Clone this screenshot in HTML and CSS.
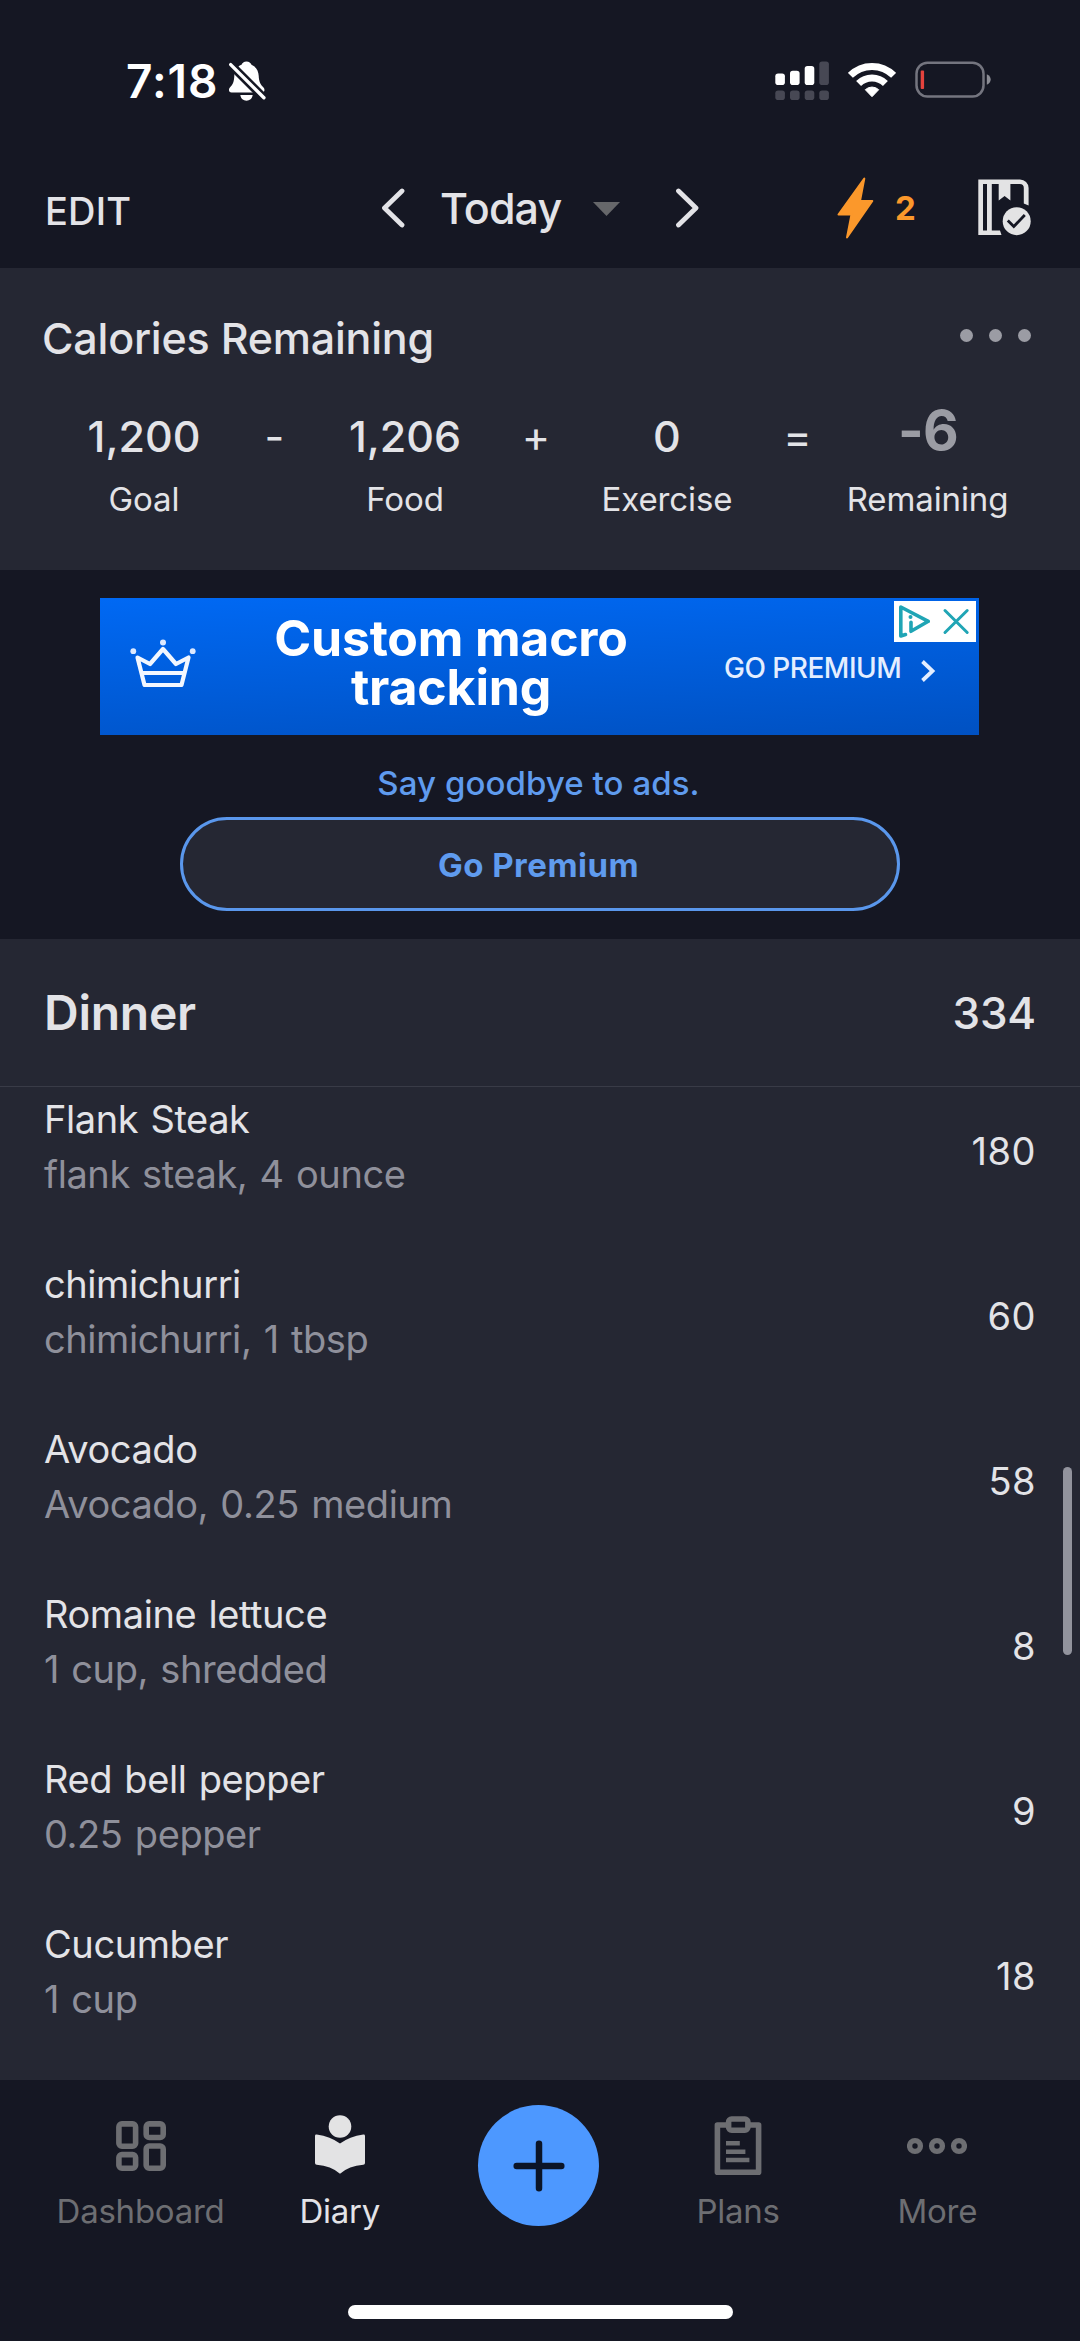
FILE: index.html
```
<!DOCTYPE html>
<html lang="en">
<head>
<meta charset="utf-8">
<title>Diary</title>
<link rel="stylesheet" href="styles.css">
</head>
<body>
<div class="screen">
  <div class="status">
    <span class="time">7:18</span>
    <svg class="bell" width="37" height="41" viewBox="229 61 37 41">
      <path fill="#fff" d="M246.500 61.500c2.600 0 4.300 1.500 5 3.300c5 2 7 6.500 7.200 11c.2 6 2 9 5 12c1.500 2 .8 4.700-1.700 4.700H231.500c-2.500 0-3.300-2.700-1.800-4.700c3-3 4.400-6 4.600-12c.2-4.500 2.200-9 7.200-11c.7-1.800 2.400-3.300 5-3.300zM240.300 95h12.400c-.6 3.600-3 5.700-6.200 5.700s-5.600-2.100-6.200-5.700z"/>
      <path stroke="#151723" stroke-width="8.500" d="M228 62l40 40"/>
      <path stroke="#fff" stroke-width="3.400" stroke-linecap="round" d="M230.700 64.600L263.900 97.800"/>
    </svg>
    <svg class="signal" width="54" height="40" viewBox="774.500 60.500 54 40">
      <g fill="#fff"><rect x="774.800" y="73" width="9.600" height="11.500" rx="2.800"/><rect x="789.500" y="70.300" width="9.600" height="14.200" rx="2.800"/><rect x="804.200" y="65.500" width="9.600" height="19" rx="2.800"/></g>
      <g fill="#474854"><rect x="818.800" y="61" width="9.600" height="23.500" rx="2.800"/><rect x="774.800" y="90" width="9.600" height="9.500" rx="2.800"/><rect x="789.500" y="90" width="9.600" height="9.500" rx="2.800"/><rect x="804.200" y="90" width="9.600" height="9.500" rx="2.800"/><rect x="818.800" y="90" width="9.600" height="9.500" rx="2.800"/></g>
    </svg>
    <svg class="wifi" width="48" height="36" viewBox="847.500 62 48 36">
      <g fill="none" stroke="#fff" stroke-width="7"><path d="M849.900 75.400a30.500 30.500 0 0 1 43.200 0"/><path d="M858.100 83.600a19 19 0 0 1 26.800 0"/></g>
      <path fill="#fff" stroke="#fff" stroke-width="1" stroke-linejoin="round" d="M871.500 96.700l-6.700-7a9.800 9.800 0 0 1 13.400 0z"/>
    </svg>
    <svg class="battery" width="76" height="38" viewBox="914.500 61.500 76 38">
      <rect x="916" y="63.200" width="67" height="33.800" rx="11" fill="none" stroke="#74757f" stroke-width="2.500"/>
      <path fill="#8b8c94" d="M986.300 74.700c5.200 1.800 5.200 8.700 0 10.500z"/>
      <rect x="920.200" y="71" width="3.400" height="18.500" rx="1" fill="#e5433d"/>
    </svg>
  </div>

  <header class="header">
    <div class="edit">EDIT</div>
    <div class="day">
      <svg width="24" height="40" viewBox="381 188 24 40"><path class="chev" d="M402 191l-17.500 17 17.500 17"/></svg>
      <span class="today">Today</span>
      <svg class="caret" width="27" height="14" viewBox="0 0 27 14"><path fill="#66676a" d="M0 0h27L13.500 14z"/></svg>
      <svg width="24" height="40" viewBox="675 188 24 40"><path class="chev" d="M678.500 191l17.500 17-17.500 17"/></svg>
    </div>
    <div class="tools">
      <svg width="38" height="64" viewBox="836 176 38 64"><path fill="#fb982b" stroke="#fb982b" stroke-width="2" stroke-linejoin="round" d="M864.300 178.500L860 201h12.300L847 237.500l4.500-23h-13z"/></svg>
      <span class="streak">2</span>
      <svg class="book" width="54" height="58" viewBox="978 178.500 54 58">
        <path fill="#e3e3e4" fill-rule="evenodd" d="M978.300 179H1020a8.600 8.600 0 0 1 8.600 8.600V205l-4.800-2V187.600a4 4 0 0 0-4-4h-9.400V200l-5.800-4.500-5.900 4.500v-16.400h-6.900V230h8.200l1.500 4.400h-23.200zM983 183.600V230h4v-46.400z"/>
        <circle cx="1016.700" cy="220.700" r="14" fill="#e3e3e4"/>
        <path fill="none" stroke="#151723" stroke-width="2.800" d="M1007.800 220l6 6 11-11.500"/>
      </svg>
    </div>
  </header>

  <section class="summary">
    <div class="summary-head">
      <h2>Calories Remaining</h2>
      <div class="dots"><i></i><i></i><i></i></div>
    </div>
    <div class="equation">
      <div class="term"><b>1,200</b><span>Goal</span></div>
      <div class="op">-</div>
      <div class="term"><b>1,206</b><span>Food</span></div>
      <div class="op">+</div>
      <div class="term"><b>0</b><span>Exercise</span></div>
      <div class="op">=</div>
      <div class="term result"><b>-6</b><span>Remaining</span></div>
    </div>
  </section>

  <section class="promo">
    <div class="banner">
      <svg width="66" height="50" viewBox="130 637.500 66 50">
        <g fill="none" stroke="#f2f7ff" stroke-width="4.200" stroke-linejoin="round"><path d="M137.500 657l12.500 6.500L163 648.500l13 15 12.500-6.500-7 27.500h-37z"/><path d="M142 672.500h42"/></g>
        <g fill="#dce9ff"><circle cx="163" cy="642" r="3"/><circle cx="133.300" cy="650.700" r="2.900"/><circle cx="192.700" cy="650.700" r="2.900"/></g>
      </svg>
      <div class="headline">Custom macro<br>tracking</div>
      <div class="cta">GO PREMIUM</div>
      <svg class="cta-arrow" width="16" height="26" viewBox="920.500 657.500 16 26"><path fill="none" stroke="#e4eeff" stroke-width="3.800" d="M923 661l10 9.500-10 9.500"/></svg>
      <div class="adchoices">
        <svg width="82" height="41" viewBox="894 601 82 41">
          <g fill="none" stroke="#20a5b5" stroke-width="3.600" stroke-linejoin="round" stroke-linecap="round"><path d="M905.500 634.500l-4.700 1.500v-29l27.500 14.300-17.300 10v-9"/><path stroke-width="3" d="M945 610.500l22.200 22M967.200 610.500l-22.200 22"/></g>
          <circle cx="910.500" cy="617" r="2" fill="#20a5b5"/>
        </svg>
      </div>
    </div>
    <div class="goodbye">Say goodbye to ads.</div>
    <div class="premium">Go Premium</div>
  </section>

  <section class="meal">
    <div class="meal-head"><h2>Dinner</h2><span>334</span></div>
    <div class="foods">
      <div class="food"><div class="info"><div>Flank Steak</div><div class="sub">flank steak, 4 ounce</div></div><span>180</span></div>
      <div class="food"><div class="info"><div>chimichurri</div><div class="sub">chimichurri, 1 tbsp</div></div><span>60</span></div>
      <div class="food"><div class="info"><div>Avocado</div><div class="sub">Avocado, 0.25 medium</div></div><span>58</span></div>
      <div class="food"><div class="info"><div>Romaine lettuce</div><div class="sub">1 cup, shredded</div></div><span>8</span></div>
      <div class="food"><div class="info"><div>Red bell pepper</div><div class="sub">0.25 pepper</div></div><span>9</span></div>
      <div class="food"><div class="info"><div>Cucumber</div><div class="sub">1 cup</div></div><span>18</span></div>
    </div>
    <div class="scrollbar"></div>
  </section>

  <nav class="tabbar">
    <div class="tabs">
      <div class="tab">
        <svg width="60" height="60" viewBox="111 2115 60 60"><g fill="none" stroke="#6d6e72" stroke-width="5.600"><rect x="118.900" y="2123.900" width="16.700" height="22.300" rx="3"/><rect x="146.200" y="2123.900" width="17" height="13.600" rx="3"/><rect x="118.900" y="2154.600" width="16.700" height="13.600" rx="3"/><rect x="146.200" y="2146" width="17" height="22.200" rx="3"/></g></svg>
        <span>Dashboard</span>
      </div>
      <div class="tab active">
        <svg width="60" height="60" viewBox="310 2114.500 60 60"><circle cx="340" cy="2126" r="11.300" fill="#e3e3e4"/><path fill="#e3e3e4" d="M315 2135.500q0-1.700 1.700-1.400q13.800 2 23.300 9q9.500-7 23.300-9q1.700-.3 1.700 1.400V2162.500q0 1.700-1.700 1.800q-14.300 1-23.300 9q-9-8-23.300-9q-1.700-.1-1.700-1.800z"/></svg>
        <span>Diary</span>
      </div>
      <div class="add"><svg width="52" height="52" viewBox="0 0 52 52"><path stroke="#0b1528" stroke-width="6.500" stroke-linecap="round" d="M26 3.700v44.600M3.700 26h44.600"/></svg></div>
      <div class="tab">
        <svg width="60" height="60" viewBox="707.600 2115 60 60"><g fill="none" stroke="#6d6e72"><g stroke-width="5.600"><path stroke-linejoin="round" d="M726 2125h-9v47.200h41.200V2125h-9"/><rect x="728.200" y="2119" width="19.300" height="11.200" rx="3"/></g><path stroke-width="4.600" d="M725.600 2143.300h13.800M725.600 2151.700H745M725.600 2160H749"/></g></svg>
        <span>Plans</span>
      </div>
      <div class="tab">
        <svg width="60" height="60" viewBox="907 2115 60 60"><g fill="none" stroke="#6d6e72" stroke-width="5.400"><circle cx="915" cy="2146" r="5.400"/><circle cx="937" cy="2146" r="5.400"/><circle cx="959" cy="2146" r="5.400"/></g></svg>
        <span>More</span>
      </div>
    </div>
    <div class="home"></div>
  </nav>
</div>
</body>
</html>
```
FILE: styles.css
```
* { box-sizing: border-box; }
body { margin: 0; background: #151723; }
h2, b { margin: 0; font-weight: inherit; font-size: inherit; }
svg { display: block; flex: none; }

.screen {
  width: 1080px;
  height: 2341px;
  overflow: hidden;
  display: flex;
  flex-direction: column;
  background: #151723;
  color: #e3e3e7;
  font-family: Inter, "Liberation Sans", sans-serif;
}

/* status bar */
.status { height: 162px; display: flex; align-items: center; padding: 0 89.5px 0 126px; color: #fff; }
.time { width: 103px; font-size: 46px; font-weight: 600; letter-spacing: 1px; }
.signal { margin-left: auto; }
.wifi { margin: -2px 19px 0; }
.battery { margin-top: -2px; }

/* header */
.header {
  height: 106px;
  padding-bottom: 14px;
  display: grid;
  grid-template-columns: 381px 318px 1fr;
  align-items: center;
}
.edit { padding: 5px 0 0 45px; font-size: 38px; font-weight: 550; letter-spacing: .2px; }
.day { display: flex; align-items: center; }
.chev { fill: none; stroke: #e3e3e7; stroke-width: 4.8; stroke-linecap: round; stroke-linejoin: round; }
.today { width: 153px; margin-left: 35px; font-size: 43px; font-weight: 500; letter-spacing: -.9px; }
.caret { margin: 2px 55px 0 0; }
.tools { display: flex; align-items: center; padding: 0 48px 0 137px; }
.streak { margin-left: 21px; font-size: 33px; font-weight: 700; color: #fb982b; }
.book { margin-left: auto; margin-top: -1px; }

/* calories */
.summary { height: 302px; padding: 44px 49px 0 42px; background: #252733; }
.summary-head { display: flex; justify-content: space-between; height: 52px; }
.summary-head h2 { font-size: 43px; line-height: 52px; font-weight: 480; letter-spacing: -.22px; }
.dots { display: flex; gap: 16px; padding-top: 17px; }
.dots i { width: 13px; height: 13px; border-radius: 50%; background: #9b9ca4; }
.equation {
  margin: 46px 0 0 12px;
  display: grid;
  grid-template-columns: 180px 81px 180px 82px 180px 81px 180px;
  text-align: center;
}
.term b { display: block; font-size: 43px; line-height: 52px; font-weight: 480; }
.term span { display: block; margin-top: 17px; font-size: 33px; line-height: 40px; letter-spacing: -.1px; }
.result b { margin-bottom: 30px; font-size: 55px; line-height: 40px; font-weight: 700; letter-spacing: -.6px; color: #9b9ca4; }
.result span { margin-top: 0; margin-right: 1px; }
.result b { margin-bottom: 29px; }
.op { font-size: 43px; line-height: 52px; }

/* ad and upsell */
.promo { height: 369px; padding-top: 28px; display: flex; flex-direction: column; align-items: center; }
.banner {
  position: relative;
  width: 879px;
  height: 137px;
  margin-right: 1px;
  padding-left: 30px;
  display: flex;
  align-items: center;
  color: #fff;
  background: linear-gradient(177deg, #0069f4, #0051c2);
}
.banner > svg { margin-top: -8px; }
.headline { width: 366px; margin: -8px 0 0 72px; text-align: center; font-size: 50px; line-height: 49px; font-weight: 700; letter-spacing: -.2px; }
.cta { width: 197px; margin: 2px 0 0 90px; font-size: 28px; font-weight: 550; letter-spacing: -.5px; color: #e4eeff; }
.banner > .cta-arrow { margin-top: 8px; margin-left: -1px; }
.adchoices { position: absolute; top: 3px; right: 3px; width: 82px; height: 41px; background: #fff; }
.goodbye { margin: 28px 3px 0 0; font-size: 33px; line-height: 40px; font-weight: 500; letter-spacing: .08px; color: #5f9bee; }
.premium {
  width: 720px;
  height: 94px;
  margin-top: 14px;
  padding: 1px 3px 0 0;
  display: flex;
  align-items: center;
  justify-content: center;
  border: 3px solid #5a97ec;
  border-radius: 47px;
  background: #252733;
  color: #5f9bee;
  font-size: 33px;
  font-weight: 700;
  letter-spacing: .5px;
}

/* meal list */
.meal { position: relative; height: 1141px; background: #252733; }
.meal-head {
  height: 148px;
  padding: 0 44px;
  display: flex;
  align-items: center;
  justify-content: space-between;
  border-bottom: 1px solid #393b47;
}
.meal-head h2 { font-size: 48px; font-weight: 600; letter-spacing: -.27px; }
.meal-head span { font-size: 44px; font-weight: 500; letter-spacing: -.2px; }
.foods { height: 993px; overflow: hidden; }
.food { height: 165px; padding: 0 44px; display: flex; align-items: center; justify-content: space-between; font-size: 38px; }
.food:first-child { margin-top: -19px; }
.info { padding-bottom: 8px; line-height: 55px; letter-spacing: -.42px; word-spacing: 2px; }
.sub { color: #8f909b; }
.food span { letter-spacing: .5px; }
.scrollbar { position: absolute; top: 528px; right: 8px; width: 9px; height: 188px; border-radius: 5px; background: #92939d; }

/* tab bar */
.tabbar { height: 261px; }
.tabs { height: 225px; padding-left: 41px; display: grid; grid-template-columns: repeat(5, 199.200px); justify-items: center; align-items: start; }
.tab { padding-top: 35px; display: flex; flex-direction: column; align-items: center; gap: 16px; font-size: 33px; line-height: 40px; letter-spacing: -.25px; color: #6d6e72; }
.active { color: #e3e3e7; }
.add { width: 121px; height: 121px; margin-top: 25px; display: flex; align-items: center; justify-content: center; border-radius: 50%; background: #4d98ff; }
.home { width: 385px; height: 14px; margin-left: 348px; border-radius: 7px; background: #fff; }
```
